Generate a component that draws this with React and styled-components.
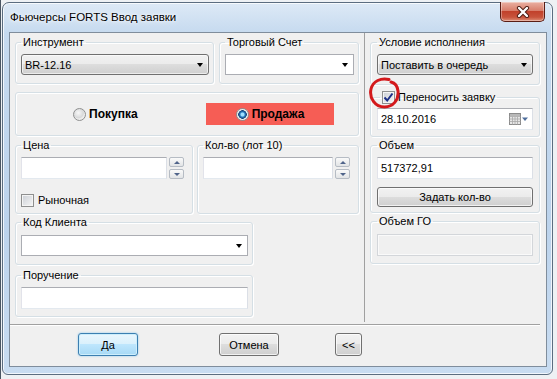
import React from 'react';
import styled, { createGlobalStyle } from 'styled-components';

const GlobalStyle = createGlobalStyle`
  html, body { margin: 0; padding: 0; }
  body {
    width: 557px;
    height: 379px;
    overflow: hidden;
    background: #eef1f4;
    font-family: "Liberation Sans", Arial, sans-serif;
    font-size: 11px;
    color: #000;
  }
  * { box-sizing: border-box; }
`;

const Desktop = styled.div`
  width: 557px;
  height: 379px;
  padding: 2px 0 0 2px;
  background: linear-gradient(90deg, #4a5663 0 1px, transparent 1px), #eef1f4;
`;

const Window = styled.div`
  width: 551px;
  height: 373px;
  display: flex;
  flex-direction: column;
  padding: 0 5px 7px 6px;
  border: 1px solid #5b6d80;
  border-radius: 7px 7px 6px 6px;
  background: linear-gradient(180deg, #dde9f6 0%, #c6daef 8%, #bcd3ec 60%, #c8dcf1 100%);
  box-shadow: inset 0 0 0 1px rgba(255, 255, 255, 0.75);
`;

const TitleBar = styled.div`
  height: 29px;
  display: flex;
  align-items: flex-start;
  justify-content: space-between;
`;

const Title = styled.div`
  padding: 7px 0 0 1px;
  font-size: 11.5px;
  line-height: 14px;
  text-shadow: 0 0 6px #fff, 0 0 3px #fff;
`;

const CloseButton = styled.div`
  width: 45px;
  height: 20px;
  margin: -1px 2px 0 0;
  border: 1px solid #5a1d14;
  border-top: none;
  border-radius: 0 0 5px 5px;
  background: linear-gradient(180deg, #eab0a2 0%, #d87f6c 45%, #c1412b 50%, #c8543c 80%, #de8f78 100%);
  box-shadow: inset 0 0 0 1px rgba(255, 255, 255, 0.35);
  display: flex;
  align-items: center;
  justify-content: center;
`;

const Client = styled.div`
  flex: 1;
  display: flex;
  flex-direction: column;
  background: #f0f0f0;
  border: 1px solid #7f8d9c;
`;

const Main = styled.div`
  height: 289px;
  display: flex;
`;

const LeftPanel = styled.div`
  width: 355px;
  padding: 3px 5px 0 5px;
  border-right: 1px solid #a0a0a0;
  display: flex;
  flex-direction: column;
`;

const RightPanel = styled.div`
  position: relative;
  flex: 1;
  padding: 3px 0 0 5px;
  display: flex;
  flex-direction: column;
`;

const Separator = styled.div`
  height: 2px;
  margin: 2px 6px 0 0;
  border-top: 1px solid #a0a0a0;
  border-bottom: 1px solid #fff;
`;

const Footer = styled.div`
  display: flex;
  align-items: flex-start;
  padding-top: 7px;
`;

const Row = styled.div`
  display: flex;
  gap: ${(p) => p.$gap ?? 5}px;
  margin-top: ${(p) => p.$mt || 0}px;
  align-items: ${(p) => p.$align || 'stretch'};
`;

const Group = styled.fieldset`
  margin: ${(p) => p.$mt || 0}px 0 0 0;
  width: ${(p) => (p.$w ? `${p.$w}px` : 'auto')};
  min-width: 0;
  padding: ${(p) => p.$pt ?? 5}px ${(p) => p.$pr ?? 4}px ${(p) => p.$pb ?? 8}px ${(p) => p.$pl ?? 5}px;
  border: 1px solid #d5dfe5;
  border-radius: 3px;
  box-shadow: inset 1px 1px 0 #fff, 1px 1px 0 #fff;
  display: flex;
  flex-direction: column;
`;

const Legend = styled.legend`
  padding: 0 2px;
  margin-left: ${(p) => p.$ml || 0}px;
  font-size: 11px;
  line-height: ${(p) => p.$lh || 13}px;
  display: flex;
  align-items: center;
  gap: 3px;
`;

const SideBox = styled.div`
  height: 44px;
  margin-top: 8px;
  border: 1px solid #d5dfe5;
  border-radius: 3px;
  box-shadow: inset 1px 1px 0 #fff, 1px 1px 0 #fff;
  display: flex;
  align-items: center;
  justify-content: space-between;
  padding: 0 24px 0 57px;
`;

const SideOption = styled.div`
  display: flex;
  align-items: center;
  justify-content: center;
  gap: 3px;
  font-size: 12px;
  font-weight: bold;
  ${(p) => p.$active && `
    width: 128px;
    height: 22px;
    background: #f65d55;
  `}
`;

const Radio = styled.span`
  width: 13px;
  height: 13px;
  border-radius: 50%;
  border: 1px solid #8e8f8f;
  background: ${(p) =>
    p.$checked
      ? 'radial-gradient(circle, #9fe0ff 0 1.5px, #2b7fc2 2.5px, #14447c 4px, #e4e6e8 4.5px, #fdfdfd 6px)'
      : 'radial-gradient(circle at 40% 35%, #f8f8f8 0, #d8d9da 5px, #ececec 6px)'};
`;

const ComboBox = styled.div`
  height: 21px;
  display: flex;
  align-items: center;
  justify-content: space-between;
  padding: 0 5px 0 3px;
  border: 1px solid ${(p) => (p.$editable ? '#abadb3' : '#707070')};
  border-radius: ${(p) => (p.$editable ? 0 : 3)}px;
  background: ${(p) =>
    p.$editable
      ? '#fff'
      : 'linear-gradient(180deg, #f2f2f2 0%, #ebebeb 50%, #dddddd 50%, #cfcfcf 100%)'};
  box-shadow: ${(p) => (p.$editable ? 'none' : 'inset 0 0 0 1px rgba(255,255,255,0.6)')};
`;

const DownArrow = styled.span`
  width: 0;
  height: 0;
  border-left: 3.5px solid transparent;
  border-right: 3.5px solid transparent;
  border-top: 4px solid ${(p) => p.$color || '#000'};
`;

const TextBox = styled.div`
  height: 22px;
  width: ${(p) => (p.$w ? `${p.$w}px` : 'auto')};
  display: flex;
  align-items: center;
  justify-content: space-between;
  padding: 0 4px 0 3px;
  border: 1px solid;
  border-color: ${(p) => (p.$disabled ? '#d3d6da' : '#abadb3 #dbdfe6 #e3e9ef #e2e3ea')};
  background: ${(p) => (p.$disabled ? '#f0f0f0' : '#fff')};
  box-shadow: ${(p) => (p.$disabled ? 'inset 0 0 0 1px #fafafa' : 'none')};
`;

const Spinner = styled.div`
  display: flex;
  flex-direction: column;
  gap: 2px;
  margin-left: 2px;
`;

const SpinButton = styled.div`
  width: 15px;
  height: 10px;
  border: 1px solid #b6bcc4;
  border-radius: 2px;
  background: linear-gradient(180deg, #fafafa, #e2e4e6);
  display: flex;
  align-items: center;
  justify-content: center;
`;

const SpinArrow = styled.span`
  width: 0;
  height: 0;
  border-left: 3px solid transparent;
  border-right: 3px solid transparent;
  ${(p) => (p.$up ? 'border-bottom: 3px solid #50648a;' : 'border-top: 3px solid #50648a;')}
`;

const CheckLine = styled.label`
  display: flex;
  align-items: center;
  gap: 4px;
  margin-top: 15px;
  line-height: 13px;
`;

const CheckBox = styled.span`
  width: 13px;
  height: 13px;
  border: 1px solid #8e8f8f;
  background: linear-gradient(135deg, #cbcfd5 0%, #f6f6f6 100%);
  box-shadow: inset 0 0 0 1px #f4f4f4;
  display: flex;
  align-items: center;
  justify-content: center;
`;

const Button = styled.button`
  width: ${(p) => p.$w}px;
  height: 23px;
  margin-left: ${(p) => p.$ml || 0}px;
  margin-top: ${(p) => p.$mt || 0}px;
  padding: 0;
  font-family: "Liberation Sans", Arial, sans-serif;
  font-size: 11px;
  color: #000;
  border: 1px solid ${(p) => (p.$default ? '#3c7fb1' : '#707070')};
  border-radius: 3px;
  background: ${(p) =>
    p.$default
      ? 'linear-gradient(180deg, #eaf6fd 0%, #d9f0fc 50%, #bee6fd 50%, #a7d9f5 100%)'
      : 'linear-gradient(180deg, #f2f2f2 0%, #ebebeb 50%, #dddddd 50%, #cfcfcf 100%)'};
  box-shadow: ${(p) =>
    p.$default
      ? 'inset 0 0 0 1px #cdeefc, 0 0 2px #7fc3ea'
      : 'inset 0 0 0 1px rgba(255,255,255,0.7)'};
`;

const Annotation = styled.svg`
  position: absolute;
  left: 3px;
  top: 43px;
  pointer-events: none;
`;

const CloseIcon = () => (
  <svg width="14" height="12" viewBox="0 0 14 12">
    <path d="M3 2 L11 10 M11 2 L3 10" stroke="#4a1a12" strokeWidth="4.2" strokeLinecap="round" />
    <path d="M3 2 L11 10 M11 2 L3 10" stroke="#fff" strokeWidth="2.4" strokeLinecap="round" />
  </svg>
);

const CalendarIcon = () => (
  <svg width="19" height="12" viewBox="0 0 19 12">
    <rect x="0.5" y="0.5" width="11" height="11" fill="#e6e6e6" stroke="#8c8c8c" />
    <path d="M0.5 3.5 H11.5 M0.5 6 H11.5 M0.5 8.5 H11.5 M3.5 3.5 V11.5 M6 3.5 V11.5 M8.5 3.5 V11.5" stroke="#a8a8a8" strokeWidth="0.8" />
    <rect x="1" y="1" width="10" height="2.2" fill="#b8b8b8" />
    <path d="M13 4.5 L19 4.5 L16 8 Z" fill="#4f6e9c" />
  </svg>
);

const Field = ({ children }) => (
  <Row $gap={0} $align="flex-start">
    {children}
    <Spinner>
      <SpinButton>
        <SpinArrow $up />
      </SpinButton>
      <SpinButton>
        <SpinArrow />
      </SpinButton>
    </Spinner>
  </Row>
);

const App = () => (
  <>
    <GlobalStyle />
    <Desktop>
      <Window>
        <TitleBar>
          <Title>Фьючерсы FORTS Ввод заявки</Title>
          <CloseButton>
            <CloseIcon />
          </CloseButton>
        </TitleBar>
        <Client>
          <Main>
            <LeftPanel>
              <Row>
                <Group $w={199}>
                  <Legend>Инструмент</Legend>
                  <ComboBox>
                    <span>BR-12.16</span>
                    <DownArrow />
                  </ComboBox>
                </Group>
                <Group $w={140}>
                  <Legend>Торговый Счет</Legend>
                  <ComboBox $editable>
                    <span />
                    <DownArrow />
                  </ComboBox>
                </Group>
              </Row>

              <SideBox>
                <SideOption>
                  <Radio />
                  Покупка
                </SideOption>
                <SideOption $active>
                  <Radio $checked />
                  Продажа
                </SideOption>
              </SideBox>

              <Row $mt={3} $gap={4}>
                <Group $w={178} $pb={6}>
                  <Legend>Цена</Legend>
                  <Field>
                    <TextBox $w={146} />
                  </Field>
                  <CheckLine>
                    <CheckBox />
                    Рыночная
                  </CheckLine>
                </Group>
                <Group $w={162} $pb={6}>
                  <Legend>Кол-во (лот 10)</Legend>
                  <Field>
                    <TextBox $w={130} />
                  </Field>
                </Group>
              </Row>

              <Group $w={238} $mt={2} $pt={6}>
                <Legend>Код Клиента</Legend>
                <ComboBox $editable>
                  <span />
                  <DownArrow />
                </ComboBox>
              </Group>

              <Group $w={238} $mt={4} $pb={7}>
                <Legend>Поручение</Legend>
                <TextBox />
              </Group>
            </LeftPanel>

            <RightPanel>
              <Group $w={170} $pl={6} $pr={6} $pb={9}>
                <Legend>Условие исполнения</Legend>
                <ComboBox>
                  <span>Поставить в очередь</span>
                  <DownArrow />
                </ComboBox>
              </Group>

              <Group $w={170} $pl={6} $pr={6} $mt={5} $pt={4} $pb={6}>
                <Legend $ml={3} $lh={14}>
                  <CheckBox>
                    <svg width="11" height="11" viewBox="0 0 11 11">
                      <path d="M1.5 5.5 L4.2 8.5 L9.5 1.5" fill="none" stroke="#1c2f86" strokeWidth="2" />
                    </svg>
                  </CheckBox>
                  Переносить заявку
                </Legend>
                <TextBox>
                  <span>28.10.2016</span>
                  <CalendarIcon />
                </TextBox>
              </Group>

              <Group $w={170} $pl={6} $pr={6} $mt={2} $pb={5}>
                <Legend>Объем</Legend>
                <TextBox>
                  <span>517372,91</span>
                </TextBox>
                <Button as="div" $w={156} $mt={8} style={{ height: 20, display: 'flex', alignItems: 'center', justifyContent: 'center' }}>
                  Задать кол-во
                </Button>
              </Group>

              <Group $w={170} $pl={6} $pr={6} $mt={2} $pt={6} $pb={7}>
                <Legend>Объем ГО</Legend>
                <TextBox $disabled />
              </Group>

              <Annotation width="34" height="34" viewBox="0 0 34 34">
                <path
                  d="M21 3.5 C13 1.5 5 5 3 13 C1 22 7 31 16.5 31 C25 31 31 24 30 15 C29.5 10 27 7 23 6"
                  fill="none"
                  stroke="#d3191c"
                  strokeWidth="3"
                  strokeLinecap="round"
                />
              </Annotation>
            </RightPanel>
          </Main>
          <Separator />
          <Footer>
            <Button $default $w={60} $ml={68}>Да</Button>
            <Button $w={60} $ml={81}>Отмена</Button>
            <Button $w={27} $ml={56}>&lt;&lt;</Button>
          </Footer>
        </Client>
      </Window>
    </Desktop>
  </>
);

export default App;
